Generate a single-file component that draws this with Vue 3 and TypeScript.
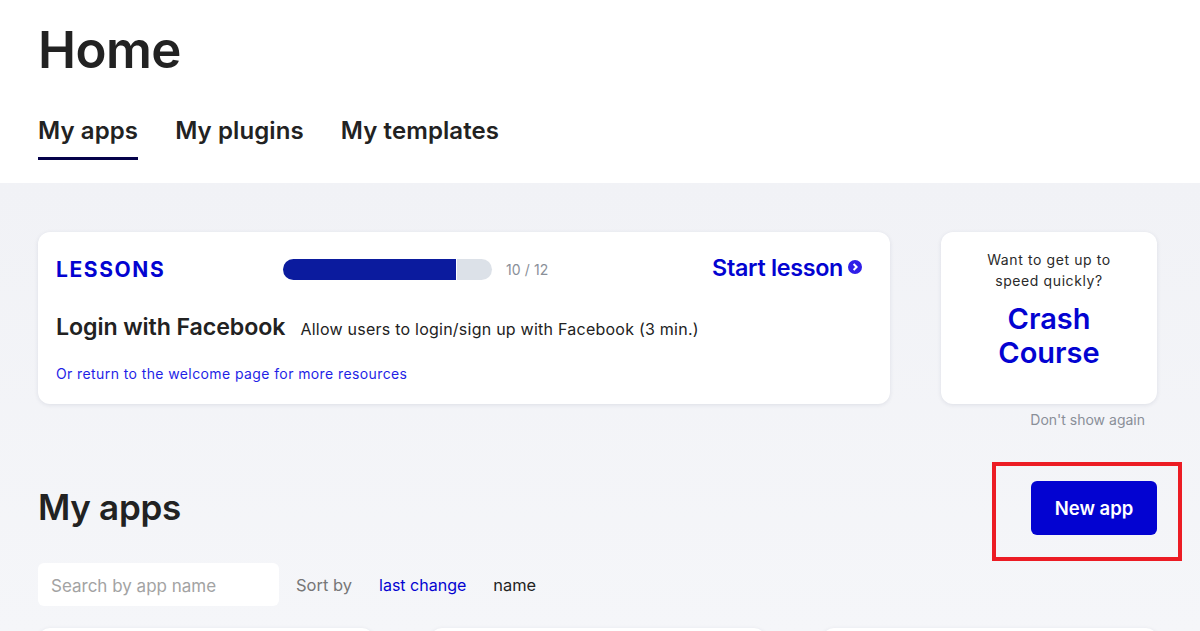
<template>
  <div class="page">
    <header class="top">
      <h1 class="title">Home</h1>
      <nav class="tabs">
        <a v-for="(tab, i) in tabs" :key="tab" class="tab" :class="{ active: i === 0 }">{{ tab }}</a>
      </nav>
    </header>

    <main class="content">
      <section class="promo">
        <div class="card lesson">
          <div class="lesson-head">
            <span class="lesson-label">LESSONS</span>
            <div class="progress">
              <div class="progress-fill" :style="{ width: progressWidth }"></div>
            </div>
            <span class="progress-text">{{ done }} / {{ total }}</span>
            <a class="start">
              Start lesson
              <svg class="start-icon" viewBox="0 0 14 14" xmlns="http://www.w3.org/2000/svg">
                <circle cx="7" cy="7" r="7" fill="#2f1ee8" />
                <path d="M5.6 4 L8.6 7 L5.6 10" fill="none" stroke="#fff" stroke-width="2" />
              </svg>
            </a>
          </div>
          <div class="lesson-body">
            <span class="lesson-name">Login with Facebook</span>
            <span class="lesson-desc">Allow users to login/sign up with Facebook (3 min.)</span>
          </div>
          <a class="welcome">Or return to the welcome page for more resources</a>
        </div>

        <div class="crash-col">
          <div class="card crash">
            <p class="crash-text">Want to get up to<br />speed quickly?</p>
            <a class="crash-link">Crash<br />Course</a>
          </div>
          <a class="dismiss">Don't show again</a>
        </div>
      </section>

      <section class="apps-head">
        <h2 class="apps-title">My apps</h2>
        <div class="new-wrap">
          <button class="new-app">New app</button>
          <div class="highlight"></div>
        </div>
      </section>

      <section class="filters">
        <input class="search" placeholder="Search by app name" />
        <span class="sort-label">Sort by</span>
        <a class="sort current">last change</a>
        <a class="sort">name</a>
      </section>

      <section class="app-grid">
        <div v-for="n in 3" :key="n" class="card app-card"></div>
      </section>
    </main>
  </div>
</template>

<script setup lang="ts">
import { computed } from 'vue'

const tabs = ['My apps', 'My plugins', 'My templates']
const done = 10
const total = 12

const progressWidth = computed(() => `${(done / total) * 100}%`)
</script>

<style>
html,
body {
  margin: 0;
  background: #f5f6f9;
  overflow: hidden;
}
</style>

<style scoped>
.page {
  width: 1200px;
  height: 631px;
  overflow: hidden;
  font-family: "Inter", "Liberation Sans", sans-serif;
  color: #222;
}

a {
  cursor: pointer;
}

.top {
  background: #fff;
  height: 183px;
  padding: 20px 38px 0;
  box-sizing: border-box;
}

.title {
  margin: 0;
  font-size: 51px;
  line-height: 60px;
  font-weight: 600;
  letter-spacing: -0.6px;
}

.tabs {
  display: flex;
  gap: 37px;
  margin-top: 35px;
}

.tab {
  font-size: 24px;
  line-height: 32px;
  font-weight: 600;
  letter-spacing: 0.1px;
  padding-bottom: 10px;
  border-bottom: 3px solid transparent;
}

.tab.active {
  border-bottom-color: #05024a;
}

.content {
  height: 448px;
  box-sizing: border-box;
  padding: 49px 43px 0 38px;
  background: linear-gradient(#f1f2f6, #f5f6f9);
}

.promo {
  display: flex;
  justify-content: space-between;
}

.card {
  background: #fff;
  border-radius: 12px;
  box-shadow: 0 1px 4px rgba(30, 40, 80, 0.1);
}

.lesson {
  width: 852px;
  height: 172px;
  box-sizing: border-box;
  padding: 26px 18px 0;
}

.lesson-head {
  display: flex;
  align-items: center;
  height: 22px;
}

.lesson-label {
  width: 227px;
  color: #0303d1;
  font-size: 21px;
  font-weight: 700;
  letter-spacing: 1.6px;
}

.progress {
  width: 209px;
  height: 21px;
  border-radius: 11px;
  background: #dce1e8;
  overflow: hidden;
}

.progress-fill {
  height: 100%;
  max-width: 174px;
  background: #0b1b9e;
  border-right: 1px solid #fff;
  box-sizing: border-box;
}

.progress-text {
  margin-left: 14px;
  color: #8a8f98;
  font-size: 14px;
  letter-spacing: 0.1px;
}

.start {
  margin-left: auto;
  margin-right: 10px;
  display: flex;
  align-items: center;
  gap: 5px;
  color: #0303d1;
  font-size: 23.3px;
  font-weight: 600;
  letter-spacing: -0.3px;
  position: relative;
  top: -2px;
}

.start-icon {
  width: 14px;
  height: 14px;
}

.lesson-body {
  display: flex;
  align-items: baseline;
  gap: 15px;
  margin-top: 33px;
}

.lesson-name {
  font-size: 23.2px;
  font-weight: 600;
  letter-spacing: -0.1px;
}

.lesson-desc {
  font-size: 16px;
  letter-spacing: 0.24px;
}

.welcome {
  display: block;
  margin-top: 24px;
  color: #1f1fe6;
  font-size: 14px;
  letter-spacing: 0.4px;
}

.crash-col {
  width: 216px;
  display: flex;
  flex-direction: column;
}

.crash {
  height: 172px;
  box-sizing: border-box;
  padding-top: 17px;
  text-align: center;
}

.crash-text {
  margin: 0;
  font-size: 14px;
  line-height: 21px;
  letter-spacing: 0.6px;
  color: #2a2a2a;
}

.crash-link {
  display: block;
  margin-top: 11px;
  color: #0303d1;
  font-size: 29px;
  line-height: 34px;
  font-weight: 600;
}

.dismiss {
  margin-top: 7px;
  padding-right: 12px;
  text-align: right;
  font-size: 14px;
  line-height: 18px;
  color: #8a8f98;
}

.apps-head {
  display: flex;
  justify-content: space-between;
  align-items: center;
  margin-top: 52px;
}

.apps-title {
  margin: 0;
  font-size: 35px;
  line-height: 52px;
  font-weight: 600;
  letter-spacing: -0.3px;
  padding-bottom: 2px;
}

.new-wrap {
  position: relative;
}

.new-app {
  display: block;
  width: 126px;
  height: 54px;
  border: 0;
  border-radius: 6px;
  background: #0303d1;
  color: #fff;
  font-family: inherit;
  font-size: 18.5px;
  font-weight: 600;
}

.highlight {
  position: absolute;
  left: -39px;
  top: -19px;
  width: 190px;
  height: 99px;
  border: 4px solid #ec1c24;
  box-sizing: border-box;
  pointer-events: none;
}

.filters {
  display: flex;
  align-items: center;
  margin-top: 28px;
  height: 43px;
}

.search {
  width: 241px;
  height: 43px;
  box-sizing: border-box;
  border: 0;
  border-radius: 6px;
  background: #fff;
  padding: 2px 13px 0;
  font-family: inherit;
  font-size: 17px;
  outline: none;
}

.search::placeholder {
  color: #a3a3a3;
}

.sort-label {
  margin-left: 17px;
  color: #777;
  font-size: 16.5px;
}

.sort {
  margin-left: 27px;
  font-size: 16.4px;
  color: #222;
}

.sort.current {
  color: #0303d1;
  font-size: 16px;
}

.app-grid {
  display: grid;
  grid-template-columns: repeat(3, 336px);
  gap: 56px;
  margin-top: 22px;
}

.app-card {
  height: 120px;
}
</style>
